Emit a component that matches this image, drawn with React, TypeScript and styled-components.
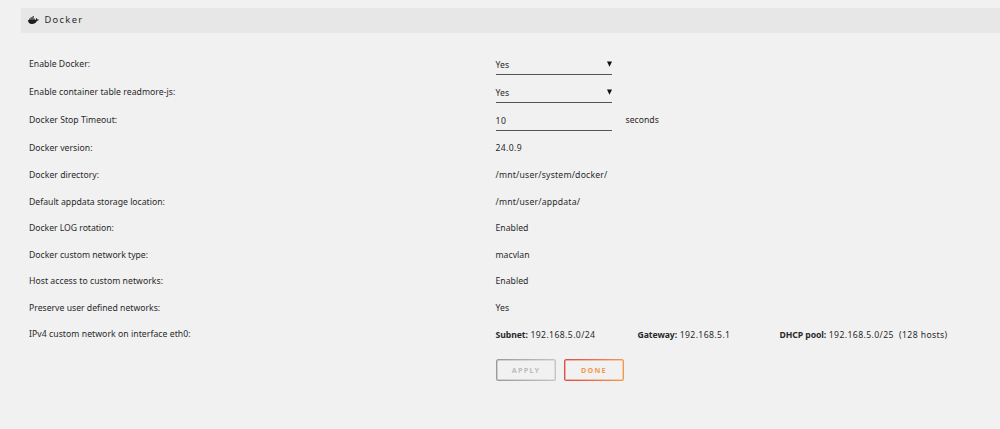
import React from "react";
import styled, { createGlobalStyle } from "styled-components";

const GlobalStyle = createGlobalStyle`
  * { box-sizing: border-box; }
  body {
    margin: 0;
    background: #f1f1f1;
    color: #2a2a2a;
    font-family: "Noto Sans", "Open Sans", sans-serif;
    font-size: 8.67px;
    overflow: hidden;
  }
`;

const Page = styled.main`
  width: 1000px;
  height: 429px;
  padding: 8px 0 0 21px;
  background: #f1f1f1;
`;

const TitleBar = styled.header`
  display: flex;
  align-items: center;
  gap: 6px;
  height: 25px;
  padding: 0 0 2px 6.5px;
  background: #e7e7e7;
  font-size: 9.3px;
  letter-spacing: 1.33px;
  color: #2a2a2a;
`;

const Form = styled.div`
  padding: 17px 0 0 8px;
`;

const Row = styled.div<{ $h: number }>`
  display: grid;
  grid-template-columns: 466.5px 1fr;
  align-items: center;
  height: ${(p) => p.$h}px;
`;

const Text = styled.span<{ $track?: number }>`
  white-space: pre;
  line-height: 12px;
  letter-spacing: ${(p) => p.$track ?? 0.02}px;
`;

const Value = styled.div`
  display: flex;
  align-items: center;
  height: 100%;
`;

const Field = styled.div`
  display: flex;
  align-items: center;
  justify-content: space-between;
  width: 116px;
  height: 20px;
  margin: 2px 14px 0 0;
  border-bottom: 1px solid #555;
`;

const Arrow = styled.svg`
  width: 5px;
  height: 6px;
  margin-bottom: 1px;
  fill: #111;
`;

const Network = styled.div`
  width: 142px;
  padding-top: 2px;
  white-space: pre;
  line-height: 12px;
  letter-spacing: 0.38px;

  b {
    letter-spacing: -0.08px;
  }
`;

const Actions = styled.div`
  display: flex;
  gap: 8px;
  padding: 12px 0 0 467px;
`;

const Button = styled.button<{ $from: string; $to: string; $ink: string }>`
  width: 60px;
  height: 22px;
  padding: 1px;
  border: 1px solid transparent;
  border-radius: 2.5px;
  background:
    linear-gradient(#f1f1f1, #f1f1f1) content-box,
    linear-gradient(#f1f1f199, #f1f1f199) padding-box,
    linear-gradient(90deg, ${(p) => p.$from}, ${(p) => p.$to}) border-box;
  color: ${(p) => p.$ink};
  font: bold 7.2px/18px "Noto Sans", sans-serif;
  letter-spacing: 1.25px;
`;

const Whale = () => (
  <svg width="11" height="8" viewBox="0 0 22 16">
    <path d="M0 8h15c1-1 .7-3 2-4 1.300 1 1.500 2 1.500 3 1-.3 2.500 0 3.500.5-1 1.800-2.500 2-4 2C16 14 12.500 16 8 16 3 16 0 13.500 0 8z" fill="#1d1d1d" />
    <path d="M2 5h12v3H2zM5 2.500h6V5H5zM9 0h3v3H9z" fill="#555" />
  </svg>
);

type Item = { label: string; h: number; value: React.ReactNode; track?: number };

const Select = ({ value }: { value: string }) => (
  <Field>
    <Text>{value}</Text>
    <Arrow viewBox="0 0 5 6"><path d="M0 .5h5L2.500 5.800z" /></Arrow>
  </Field>
);

const items: Item[] = [
  { label: "Enable Docker:", h: 28, value: <Select value="Yes" /> },
  { label: "Enable container table readmore-js:", h: 28, value: <Select value="Yes" />, track: 0.04 },
  { label: "Docker Stop Timeout:", h: 28, value: <><Field><Text $track={0.5}>10</Text></Field><Text>seconds</Text></> },
  { label: "Docker version:", h: 28, value: <Text $track={0.36}>24.0.9</Text> },
  { label: "Docker directory:", h: 26, value: <Text $track={0.2}>/mnt/user/system/docker/</Text> },
  { label: "Default appdata storage location:", h: 27, value: <Text $track={0.2}>/mnt/user/appdata/</Text>, track: 0 },
  { label: "Docker LOG rotation:", h: 26, value: <Text>Enabled</Text>, track: -0.04 },
  { label: "Docker custom network type:", h: 27, value: <Text>macvlan</Text>, track: -0.01 },
  { label: "Host access to custom networks:", h: 26, value: <Text>Enabled</Text>, track: 0.04 },
  { label: "Preserve user defined networks:", h: 27, value: <Text>Yes</Text>, track: 0 },
  {
    label: "IPv4 custom network on interface eth0:",
    h: 26,
    track: 0.05,
    value: (
      <>
        <Network><b>Subnet:</b> 192.168.5.0/24</Network>
        <Network><b>Gateway:</b> 192.168.5.1</Network>
        <Network><b>DHCP pool:</b> 192.168.5.0/25  (128 hosts)</Network>
      </>
    ),
  },
];

export default function App() {
  return (
    <Page>
      <GlobalStyle />
      <TitleBar><Whale />Docker</TitleBar>
      <Form>
        {items.map((it) => (
          <Row key={it.label} $h={it.h}>
            <Text $track={it.track}>{it.label}</Text>
            <Value>{it.value}</Value>
          </Row>
        ))}
        <Actions>
          <Button $from="#999" $to="#c4c4c4" $ink="#bcbcbc">APPLY</Button>
          <Button $from="#dc4c45" $to="#f6994a" $ink="#f39a50">DONE</Button>
        </Actions>
      </Form>
    </Page>
  );
}
